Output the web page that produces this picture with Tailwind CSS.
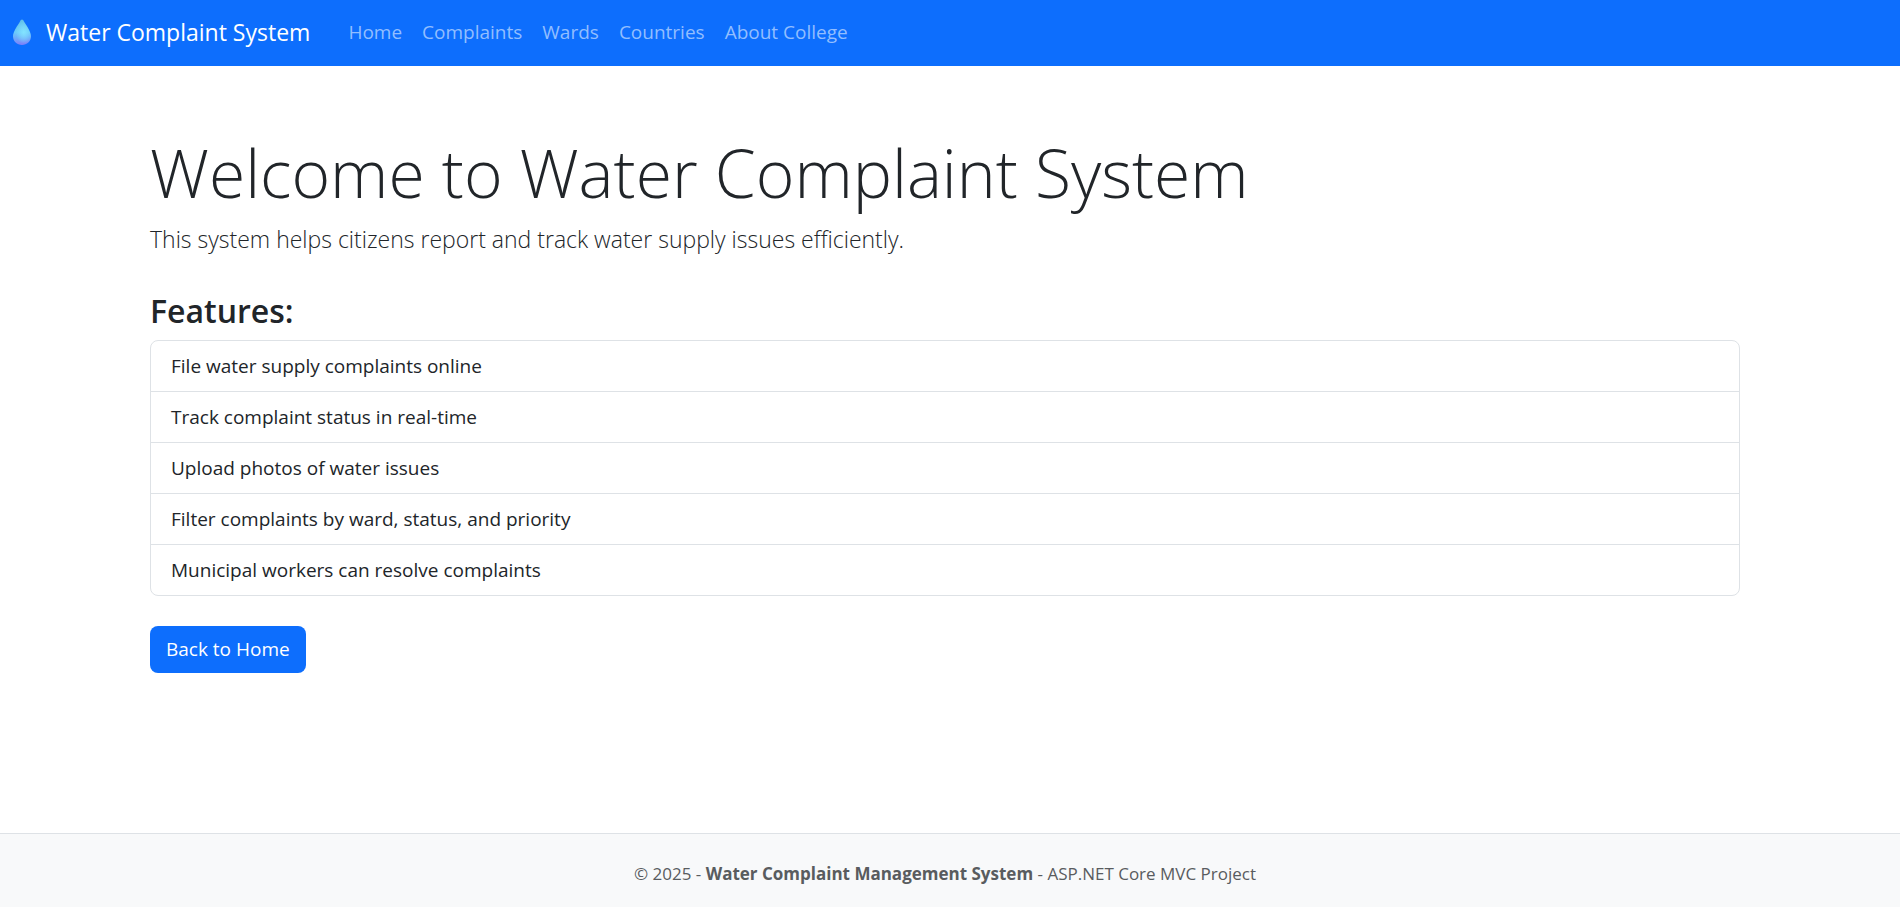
<!DOCTYPE html>
<html lang="en">
<head>
<meta charset="utf-8">
<meta name="viewport" content="width=device-width, initial-scale=1">
<title>Water Complaint System</title>
<script src="https://cdn.jsdelivr.net/npm/@tailwindcss/browser@4"></script>
</head>
<body class="flex min-h-screen flex-col bg-white font-['Open_Sans','Noto_Sans',sans-serif] text-[19px] leading-[30px] text-[#212529]">
  <nav class="flex flex-wrap items-center bg-[#0d6efd] pt-3 pb-3.5 pl-3" aria-label="Main">
    <a href="#" class="mr-7 flex items-center text-[23px] leading-10 text-white">
      <svg class="mr-3.5 h-7 w-5" viewBox="0 0 20 28" aria-hidden="true">
        <defs>
          <linearGradient id="drop" x1="0" y1="0" x2="0" y2="1">
            <stop offset="0" stop-color="#5fc0e8"/>
            <stop offset="0.5" stop-color="#6ccbfb"/>
            <stop offset="0.75" stop-color="#70a8fa"/>
            <stop offset="1" stop-color="#7f7dfa"/>
          </linearGradient>
          <radialGradient id="shine" cx="0.6" cy="0.5" r="0.45">
            <stop offset="0" stop-color="#86e6ff" stop-opacity="0.9"/>
            <stop offset="1" stop-color="#86e6ff" stop-opacity="0"/>
          </radialGradient>
        </defs>
        <path d="M10 1.5C9.200 1.5 8.700 2.200 8 3.400C5.500 7.700 1 13.500 1 18.300C1 23.400 5 27 10 27C15 27 19 23.400 19 18.300C19 13.500 14.500 7.700 12 3.400C11.300 2.200 10.800 1.500 10 1.500Z" fill="url(#drop)"/>
        <path d="M10 1.5C9.200 1.5 8.700 2.200 8 3.400C5.500 7.700 1 13.500 1 18.300C1 23.400 5 27 10 27C15 27 19 23.400 19 18.300C19 13.500 14.500 7.700 12 3.400C11.300 2.200 10.800 1.500 10 1.500Z" fill="url(#shine)"/>
      </svg>
      Water Complaint System
    </a>
    <ul class="flex flex-wrap text-[#92beff]">
      <li><a href="#" class="block px-2.5">Home</a></li>
      <li><a href="#" class="block px-2.5">Complaints</a></li>
      <li><a href="#" class="block px-2.5">Wards</a></li>
      <li><a href="#" class="block px-2.5">Countries</a></li>
      <li><a href="#" class="block px-2.5">About College</a></li>
    </ul>
  </nav>

  <main class="grow pt-16 pr-2.5 pb-10">
    <div class="mx-auto max-w-[1590px]">
      <h1 class="text-[66px] leading-[84px] font-light">Welcome to Water Complaint System</h1>
      <p class="mt-1.5 text-[23px] leading-[38px] font-light">This system helps citizens report and track water supply issues efficiently.</p>
      <h2 class="mt-8 text-[32px] leading-[42px] font-semibold">Features:</h2>
      <ul class="mt-2 divide-y divide-[#dee2e6] rounded-lg border border-[#dee2e6]">
        <li class="px-5 py-2.5">File water supply complaints online</li>
        <li class="px-5 py-2.5">Track complaint status in real-time</li>
        <li class="px-5 py-2.5">Upload photos of water issues</li>
        <li class="px-5 py-2.5">Filter complaints by ward, status, and priority</li>
        <li class="px-5 py-2.5">Municipal workers can resolve complaints</li>
      </ul>
      <a href="#" class="mt-[30px] inline-block rounded-lg bg-[#0d6efd] px-4 py-2 leading-[31px] text-white">Back to Home</a>
    </div>
  </main>

  <footer class="border-t border-[#dee2e6] bg-[#f8f9fa] pt-[26px] pr-2.5 pb-5 text-center text-[17px] leading-[27px] text-[#595c5f]">
    © 2025 - <strong class="font-bold">Water Complaint Management System</strong> - ASP.NET Core MVC Project
  </footer>
</body>
</html>
